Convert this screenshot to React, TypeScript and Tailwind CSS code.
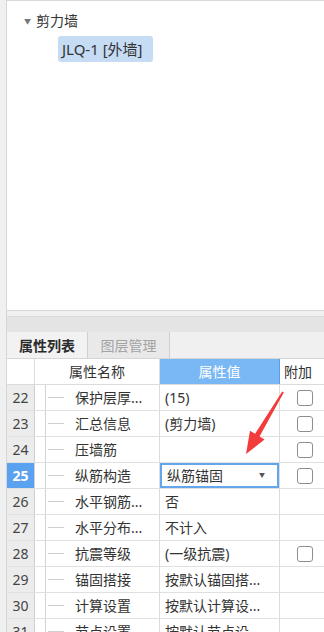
import React from "react";

type Row = {
  no: number;
  name: string;
  value: string;
  check: boolean;
};

const rows: Row[] = [
  { no: 22, name: "保护层厚...", value: "(15)", check: true },
  { no: 23, name: "汇总信息", value: "(剪力墙)", check: true },
  { no: 24, name: "压墙筋", value: "", check: true },
  { no: 25, name: "纵筋构造", value: "纵筋锚固", check: true },
  { no: 26, name: "水平钢筋...", value: "否", check: false },
  { no: 27, name: "水平分布...", value: "不计入", check: false },
  { no: 28, name: "抗震等级", value: "(一级抗震)", check: true },
  { no: 29, name: "锚固搭接", value: "按默认锚固搭...", check: false },
  { no: 30, name: "计算设置", value: "按默认计算设...", check: false },
  { no: 31, name: "节点设置", value: "按默认节点设...", check: false },
];

function CheckBox() {
  return <div className="w-[16px] h-[16px] rounded-[3px] border border-[#8e8e8e] bg-white" />;
}

export default function App() {
  return (
    <div
      className="relative w-[324px] h-[632px] overflow-hidden bg-[#f0f0f0] flex text-[14px] text-[#333]"
      style={{ fontFamily: '"Noto Sans", "Noto Sans CJK SC", sans-serif' }}
    >
      {/* left strip */}
      <div className="w-[7px] shrink-0 border-r border-[#d6d6d6] bg-[#f0f0f0]" />

      <div className="flex-1 flex flex-col min-w-0">
        {/* tree panel */}
        <div className="h-[311px] shrink-0 bg-white border-t border-b border-[#d9d9d9] pt-[10px] pl-[17px]">
          <div className="flex items-center h-[20px] gap-[5px]">
            <span className="text-[7px] text-[#777] leading-none">▼</span>
            <span className="leading-none text-[14px]">剪力墙</span>
          </div>
          <div className="mt-[5px] ml-[34px] w-[95px] h-[26px] rounded-[3px] bg-[#c5dcf4] flex items-center pl-[4px] text-[15px] text-[#333] whitespace-nowrap">
            JLQ-1 [外墙]
          </div>
        </div>

        <div className="h-[5px] shrink-0" />

        {/* properties panel */}
        <div className="flex-1 flex flex-col border-t border-[#d9d9d9] bg-white">
          <div className="h-[15px] bg-[#e4e4e4] shrink-0" />
          <div className="h-[27px] shrink-0 flex bg-[#f0f0f0] border-b border-[#d6d6d6]">
            <div className="w-[81px] flex items-center justify-center font-bold text-[#2b2b2b] border-r border-[#d0d0d0] bg-[#f2f2f2]">
              属性列表
            </div>
            <div className="w-[82px] flex items-center justify-center text-[#a3a3a3] bg-[#e9e9e9] border-r border-[#d0d0d0]">
              图层管理
            </div>
          </div>

          {/* header */}
          <div className="h-[26px] shrink-0 flex border-b border-[#dcdcdc]">
            <div className="w-[28px] border-r border-[#dcdcdc] bg-white" />
            <div className="w-[125px] border-r border-[#dcdcdc] flex items-center justify-center">
              属性名称
            </div>
            <div className="w-[120px] bg-[#7ab8f5] border-r border-[#5b9fe6] flex items-center justify-center text-white">
              属性值
            </div>
            <div className="flex-1 flex items-center pl-[4px]">附加</div>
          </div>

          {rows.map((r) => {
            const sel = r.no === 25;
            return (
              <div key={r.no} className="h-[26px] shrink-0 flex border-b border-[#e0e0e0]">
                <div
                  className={
                    sel
                      ? "w-[28px] bg-[#5aa2f0] text-white font-bold flex items-center justify-center border-r border-[#cfcfcf]"
                      : "w-[28px] bg-[#ececec] text-[#444] flex items-center justify-center border-r border-[#cfcfcf]"
                  }
                >
                  {r.no}
                </div>
                <div className="w-[125px] border-r border-[#dcdcdc] flex items-center relative">
                  <div className="ml-[10px] w-px self-stretch bg-[#d4d4d4]" />
                  <div className="ml-[2px] w-[16px] h-px bg-[#cfcfcf]" />
                  <span className="ml-[11px] truncate">{r.name}</span>
                </div>
                <div className="w-[120px] border-r border-[#dcdcdc] flex items-center">
                  {sel ? (
                    <div className="w-full h-full border-2 border-[#64a6ec] flex items-center justify-between pl-[5px] pr-[12px]">
                      <span>{r.value}</span>
                      <span className="text-[6px] text-[#555]">▼</span>
                    </div>
                  ) : (
                    <span className="pl-[5px] whitespace-nowrap">{r.value}</span>
                  )}
                </div>
                <div className="flex-1 flex items-center pl-[17px]">{r.check && <CheckBox />}</div>
              </div>
            );
          })}
        </div>
      </div>

      {/* red annotation arrow */}
      <svg className="absolute inset-0 pointer-events-none" width="324" height="632" viewBox="0 0 324 632">
        <polygon
          points="283.8,392.6 259.5,436.4 264.6,439.6 246,454 250,430.8 255.1,433.8 282.2,391.4"
          fill="#f23b3b"
        />
      </svg>
    </div>
  );
}
